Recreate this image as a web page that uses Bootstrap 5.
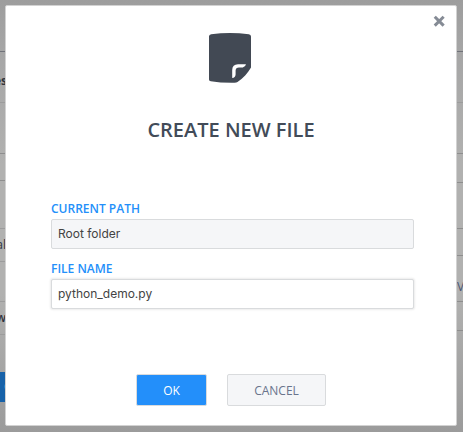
<!DOCTYPE html>
<html lang="en">
<head>
<meta charset="utf-8">
<meta name="viewport" content="width=device-width, initial-scale=1">
<title>Create new file</title>
<link href="https://cdn.jsdelivr.net/npm/bootstrap@5.3.0/dist/css/bootstrap.min.css" rel="stylesheet">
<style>
body { width: 463px; height: 432px; font-family: "Open Sans", "Noto Sans", sans-serif; background: linear-gradient(#9d9d9d, #a6a6a6 12%, #b1b1b0 38%, #b1b1b0 68%, #9b9b9b); }
.page-strip { width: 7px; font-size: 12px; color: #30343e; line-height: 16px; }
.page-row { height: var(--h); border-bottom: 1px solid #8e8e8e; display: flex; align-items: center; overflow: hidden; flex-shrink: 0; white-space: nowrap; }
.page-row.dark-rule { border-color: #707279; }
.page-row.soft-rule { border-color: #9c9c9c; }
.strip-left .page-row { justify-content: flex-end; }
.strip-left .soft-rule:not(.fw-bold) span { padding-right: 1px; }
.h-a { --h: 52px; } .h-b { --h: 51px; } .h-c { --h: 27px; } .h-d { --h: 29px; }
.h-e { --h: 48px; } .h-f { --h: 46px; } .h-g { --h: 33px; } .h-h { --h: 40px; }
.page-button { height: 30px; margin-top: 37px; background: #1762a9; color: #b5c6d8; line-height: 30px; padding-left: 4px; overflow: hidden; }
.page-link-text { color: #4b5674; padding-left: 1px; }
.dialog-box { left: 5px; top: 5px; width: 452px; height: 421px; border: 1px solid #d2d2d2; border-radius: 2px; background: #fff; padding: 0 42px 0 45px; }
.close-icon { position: absolute; right: 11px; top: 9px; line-height: 0; }
.file-icon { margin: 26px 6px 0 0; height: 52px; }
.dialog-heading { font-size: 20px; font-weight: 600; line-height: 28px; color: #424b58; margin: 32px 0 0 -3px; }
.dialog-form { margin-top: 57px; }
.field-label { font-size: 12px; font-weight: 600; line-height: 16px; color: #238ffa; margin: 0; display: block; }
.field-input { height: 30px; margin: 2px 0 12px; padding: 0 6px 1px; font: 12px/27px Inter, sans-serif; color: #434343; border: 1px solid #d9dbdd; border-radius: 2px; }
.field-input[readonly] { background: #f5f6f8; }
.field-input.active-input { box-shadow: 0 0 2px 1px rgba(0,0,0,.08); }
.dialog-actions { gap: 20px; margin-top: 65px; margin-left: -4px; }
.dialog-btn { height: 32px; font-size: 12px; line-height: 29px; padding: 1px 0 0 1px; border: 1px solid #d9dbdd; border-radius: 2px; }
.btn-ok { width: 71px; background: #238ffa; color: #fff; }
.btn-cancel { width: 99px; background: #f5f6f8; color: #69748c; }
</style>
<script src="https://cdn.jsdelivr.net/npm/bootstrap@5.3.0/dist/js/bootstrap.bundle.min.js"></script>
</head>
<body class="m-0 overflow-hidden position-relative">
<div class="d-flex justify-content-between h-100">
  <div class="page-strip strip-left">
    <div class="page-row h-a dark-rule"></div>
    <div class="page-row h-b soft-rule pt-2 fw-bold"><span>es</span></div>
    <div class="page-row h-b"></div>
    <div class="page-row h-c"></div>
    <div class="page-row h-e soft-rule"></div>
    <div class="page-row h-g soft-rule"><span>al</span></div>
    <div class="page-row h-h soft-rule"></div>
    <div class="page-row h-g soft-rule fw-semibold"><span>w</span></div>
    <div class="page-button">C</div>
  </div>
  <div class="page-strip strip-right">
    <div class="page-row h-a dark-rule"></div>
    <div class="page-row h-b soft-rule"></div>
    <div class="page-row h-b"></div>
    <div class="page-row h-d"></div>
    <div class="page-row h-f"></div>
    <div class="page-row h-c"></div>
    <div class="page-row h-f pt-3"><span class="page-link-text">V</span></div>
    <div class="page-row h-d"></div>
  </div>
</div>
<div class="dialog-box position-absolute" role="dialog" aria-labelledby="heading">
  <a class="close-icon" href="#" aria-label="Close"><svg width="12" height="12" viewBox="0 0 12 12"><path d="M2.800 2.800 9.600 9.600M9.600 2.800 2.800 9.600" stroke="#858b95" stroke-width="3" stroke-linecap="square" fill="none"/></svg></a>
  <div class="file-icon d-flex justify-content-center">
    <svg width="44" height="52" viewBox="0 0 44 52"><path d="M1 4.500Q1 2.700 3.200 2.200 22-.2 40.800 2.200 43 2.700 43 4.500V35.500C40 41 35 46.500 29.500 50Q28.500 50.700 26.500 50.800 13 51 2.800 49.300 1 48.900 1 47.500Z" fill="#424954"/><path d="M24.200 46V38Q24.300 32.500 30 32.300H38Q37.500 34.900 34.800 35.400H31Q27.700 35.500 27.600 38.500V42.500Q27.300 45.600 24.200 46Z" fill="#fff"/></svg>
  </div>
  <h1 class="dialog-heading text-center" id="heading">CREATE NEW FILE</h1>
  <form class="dialog-form">
    <label class="field-label" for="path">CURRENT PATH</label>
    <input class="field-input form-control" id="path" value="Root folder" readonly>
    <label class="field-label" for="name">FILE NAME</label>
    <input class="field-input form-control active-input" id="name" value="python_demo.py">
    <div class="d-flex justify-content-center dialog-actions">
      <button type="button" class="btn dialog-btn btn-ok">OK</button>
      <button type="button" class="btn dialog-btn btn-cancel">CANCEL</button>
    </div>
  </form>
</div>
</body>
</html>
